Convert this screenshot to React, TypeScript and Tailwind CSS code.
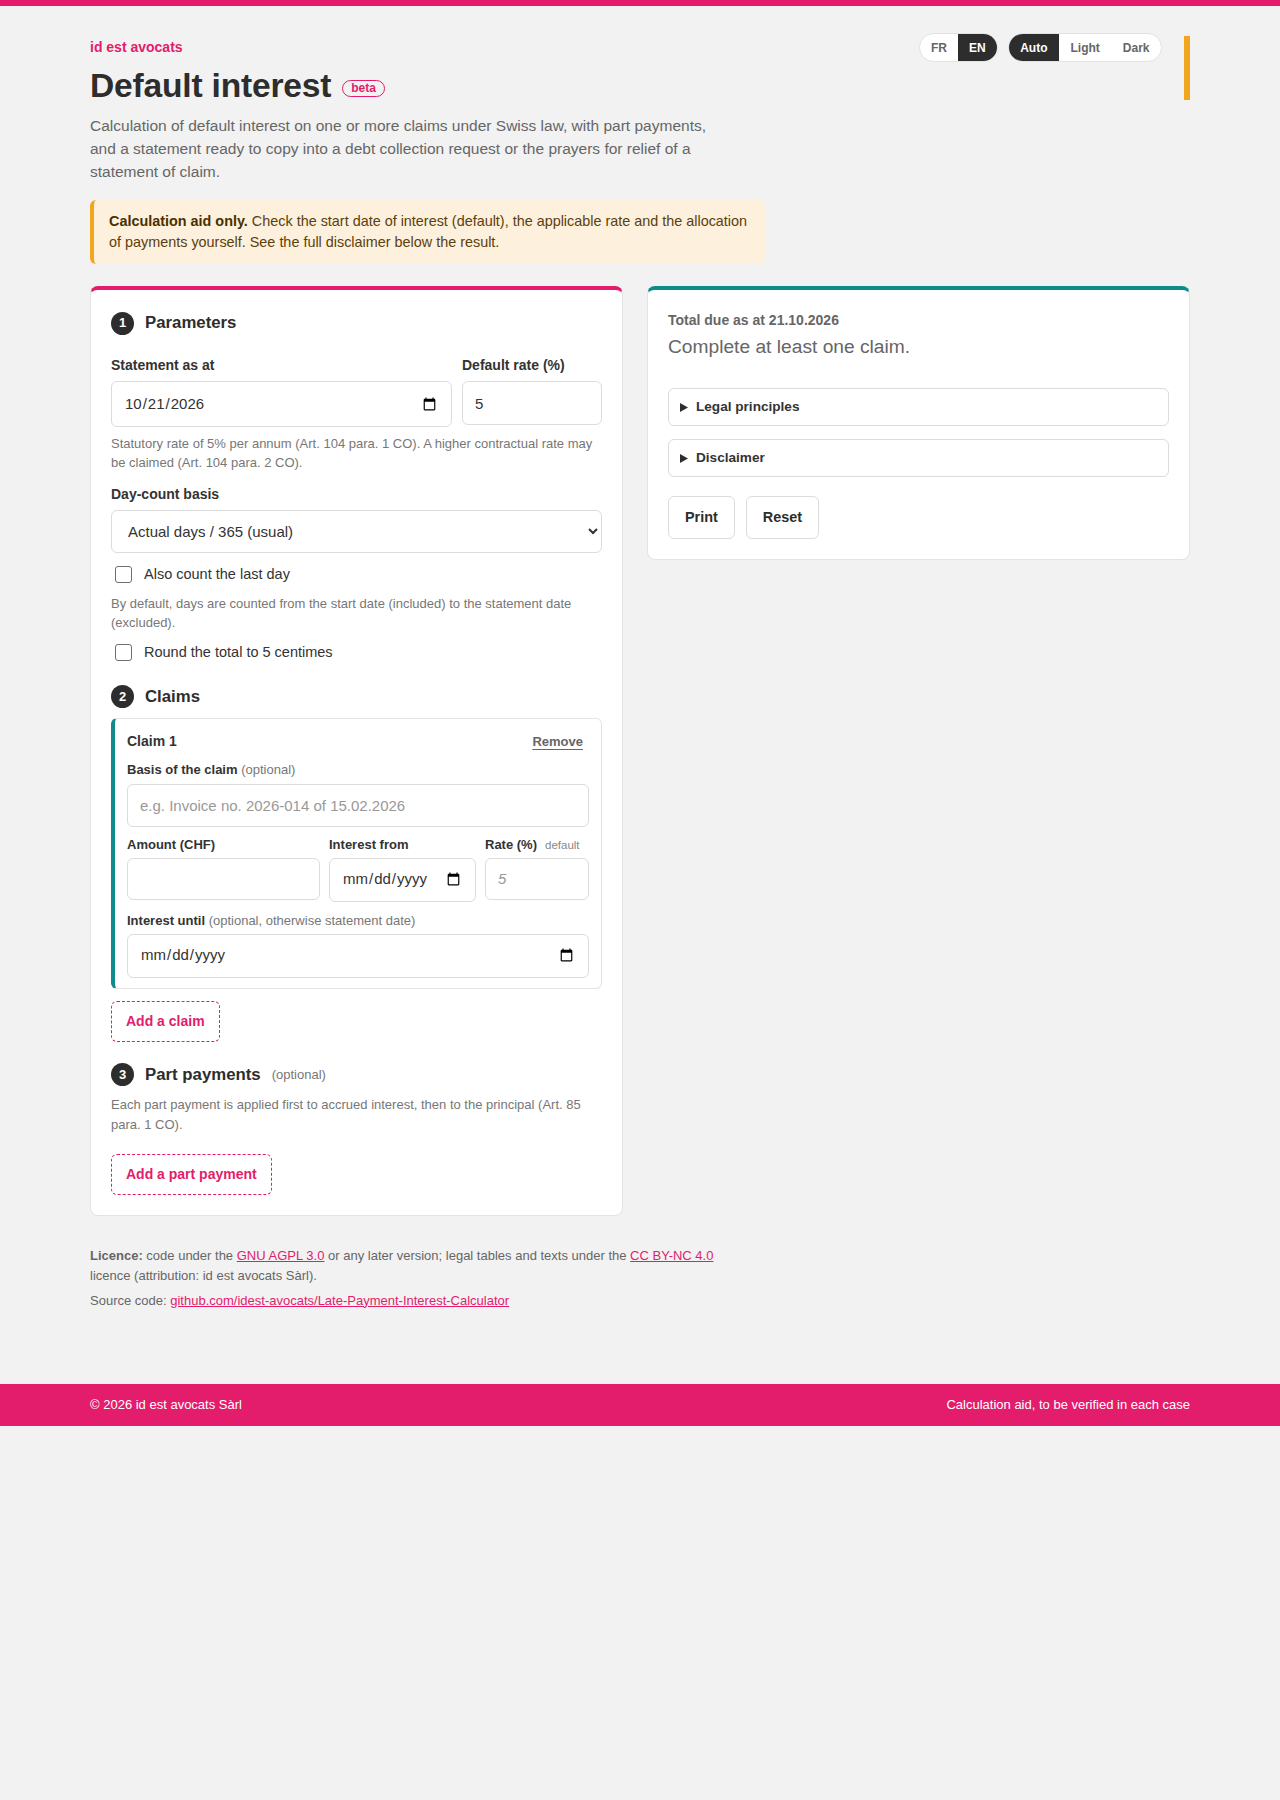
import React from "react";

const PINK = "text-[#e31c6c]";

function StepBadge({ n }: { n: number }) {
  return (
    <span className="flex h-[23px] w-[23px] shrink-0 items-center justify-center rounded-full bg-[#2d2d2d] text-[13px] font-bold text-white">
      {n}
    </span>
  );
}

function SectionHeader({ n, title, note }: { n: number; title: string; note?: string }) {
  return (
    <div className="flex h-6 items-center gap-[11px]">
      <StepBadge n={n} />
      <h2 className="text-[16.8px] font-bold leading-5 text-[#2d2d2d]">{title}</h2>
      {note && <span className="text-[13px] text-[#777]">{note}</span>}
    </div>
  );
}

function Checkbox({ label }: { label: string }) {
  return (
    <label className="flex h-5 items-center gap-3 pl-1">
      <input
        type="checkbox"
        className="h-[17px] w-[17px] shrink-0 appearance-none rounded-[3px] border border-[#6f6f6f] bg-white"
      />
      <span className="text-[14.5px] text-[#333]">{label}</span>
    </label>
  );
}

const inputCls =
  "block w-full rounded-[6px] border border-[#dcdcdc] bg-white px-3 text-[15px] text-[#333] outline-none";

function Disclosure({ title, mt }: { title: string; mt: string }) {
  return (
    <div className={`${mt} flex items-center gap-2 rounded-[6px] border border-[#dcdcdc] px-[11px] py-[10px]`}>
      <svg width="8" height="9" viewBox="0 0 8 9" className="shrink-0">
        <path d="M0 0 L8 4.5 L0 9 Z" fill="#2d2d2d" />
      </svg>
      <span className="text-[13.6px] font-bold leading-4 text-[#333]">{title}</span>
    </div>
  );
}

export default function App() {
  return (
    <div className="min-h-[1800px] bg-[#f2f2f2] font-['Liberation_Sans',Arial,sans-serif] text-[#333]">
      <div className="h-[6px] bg-[#e31c6c]" />

      <div className="mx-auto w-[1100px]">
        {/* Header */}
        <header className="flex items-start justify-between pt-[27px]">
          <div>
            <div className={`mt-[6px] text-[14px] font-bold leading-4 ${PINK}`}>id est avocats</div>
            <div className="mt-[11px] flex items-center gap-[11px]">
              <h1 className="text-[33.6px] font-bold leading-[40px] tracking-[-0.2px] text-[#2d2d2d]">
                Default interest
              </h1>
              <span className={`mt-[4px] rounded-full border border-[#e31c6c] px-2 text-[12px] font-bold leading-[15px] ${PINK}`}>
                beta
              </span>
            </div>
            <p className="mt-[7.5px] max-w-[622px] text-[15.5px] leading-[23px] text-[#666]">
              Calculation of default interest on one or more claims under Swiss law, with part payments,
              and a statement ready to copy into a debt collection request or the prayers for relief of a
              statement of claim.
            </p>
            <div className="mt-[17.5px] w-[675px] rounded-[6px] border-l-4 border-[#f2a51f] bg-[#fdf0dc] py-[11px] pl-[15px] pr-[12px] text-[14.4px] leading-[21px] text-[#5b3f0c]">
              <strong className="text-[#4a3000]">Calculation aid only.</strong> Check the start date of
              interest (default), the applicable rate and the allocation of payments yourself. See the full
              disclaimer below the result.
            </div>
          </div>

          <div className="flex items-start gap-[22px]">
            <div className="flex items-start gap-[10px]">
              <div className="flex h-[29px] overflow-hidden rounded-full border border-[#e2e2e2] bg-white text-[12px] font-bold">
                <span className="flex items-center px-[11px] text-[#666]">FR</span>
                <span className="flex items-center bg-[#2d2d2d] px-[11px] text-white">EN</span>
              </div>
              <div className="flex h-[29px] overflow-hidden rounded-full border border-[#e2e2e2] bg-white text-[12px] font-bold">
                <span className="flex items-center bg-[#2d2d2d] px-[11.5px] text-white">Auto</span>
                <span className="flex items-center px-[11.5px] text-[#666]">Light</span>
                <span className="flex items-center px-[11.5px] text-[#666]">Dark</span>
              </div>
            </div>
            <div className="mt-[3px] h-[64px] w-[6px] bg-[#f2a51f]" />
          </div>
        </header>

        {/* Main grid */}
        <main className="mt-[22px] grid grid-cols-[533px_1fr] items-start gap-6">
          {/* Form card */}
          <section className="rounded-[8px] border border-[#e3e3e3] border-t-4 border-t-[#e31c6c] bg-white px-5 pb-5 pt-[21px]">
            <SectionHeader n={1} title="Parameters" />

            <div className="mt-[22px] grid grid-cols-[minmax(0,1fr)_140px] gap-x-[10px]">
              <div>
                <div className="mb-[7px] text-[14px] font-bold leading-[17px]">Statement as at</div>
                <input type="date" defaultValue="2026-10-21" className={`${inputCls} h-[46px] text-[15.5px]`} />
              </div>
              <div>
                <div className="mb-[7px] text-[14px] font-bold leading-[17px]">Default rate (%)</div>
                <input type="text" defaultValue="5" className={`${inputCls} h-[44px]`} />
              </div>
            </div>
            <p className="mt-[6.5px] text-[13px] leading-[19px] text-[#777]">
              Statutory rate of 5% per annum (Art. 104 para. 1 CO). A higher contractual rate may be claimed
              (Art. 104 para. 2 CO).
            </p>

            <div className="mt-[14px] mb-[7px] text-[14px] font-bold leading-[17px]">Day-count basis</div>
            <select className={`${inputCls} h-[43px] text-[15.5px]`} defaultValue="365">
              <option value="365">Actual days / 365 (usual)</option>
              <option value="360">30 / 360</option>
            </select>

            <div className="mt-[12px]">
              <Checkbox label="Also count the last day" />
            </div>
            <p className="mt-[9px] text-[13px] leading-[19px] text-[#777]">
              By default, days are counted from the start date (included) to the statement date (excluded).
            </p>
            <div className="mt-[11px]">
              <Checkbox label="Round the total to 5 centimes" />
            </div>

            <div className="mt-[22px]">
              <SectionHeader n={2} title="Claims" />
            </div>

            <div className="mt-[9px] rounded-[6px] border border-[#e3e3e3] border-l-4 border-l-[#0f8b8d] px-3 pb-[10px] pt-[14px]">
              <div className="flex items-center justify-between">
                <span className="text-[14px] font-bold leading-[17px]">Claim 1</span>
                <span className="mr-[6px] text-[13px] font-bold leading-[17px] text-[#666] underline underline-offset-[3px]">
                  Remove
                </span>
              </div>

              <div className="mt-3 mb-[6px] text-[13px] leading-4">
                <b>Basis of the claim</b> <span className="text-[#777]">(optional)</span>
              </div>
              <input
                type="text"
                placeholder="e.g. Invoice no. 2026-014 of 15.02.2026"
                className={`${inputCls} h-[43px] placeholder:text-[#999]`}
              />

              <div className="mt-[10px] grid grid-cols-[minmax(0,193fr)_minmax(0,147fr)_minmax(0,104fr)] gap-x-[9px]">
                <div>
                  <div className="mb-[5px] text-[13px] font-bold leading-4">Amount (CHF)</div>
                  <input type="text" className={`${inputCls} h-[42px]`} />
                </div>
                <div>
                  <div className="mb-[5px] text-[13px] font-bold leading-4">Interest from</div>
                  <input type="date" className={`${inputCls} h-[44px]`} />
                </div>
                <div>
                  <div className="mb-[5px] flex items-baseline gap-2 text-[13px] leading-4">
                    <b>Rate (%)</b>
                    <span className="text-[11.5px] text-[#888]">default</span>
                  </div>
                  <input
                    type="text"
                    placeholder="5"
                    className={`${inputCls} h-[42px] placeholder:italic placeholder:text-[#999]`}
                  />
                </div>
              </div>

              <div className="mt-[11px] mb-[5px] text-[13px] leading-4">
                <b>Interest until</b>{" "}
                <span className="text-[#777]">(optional, otherwise statement date)</span>
              </div>
              <input type="date" className={`${inputCls} h-[44px]`} />
            </div>

            <button className={`mt-3 h-[41px] rounded-[6px] border border-dashed border-[#e31c6c] px-[14px] text-[14px] font-bold ${PINK}`}>
              Add a claim
            </button>

            <div className="mt-[21px]">
              <SectionHeader n={3} title="Part payments" note="(optional)" />
            </div>
            <p className="mt-[8px] text-[13px] leading-5 text-[#777]">
              Each part payment is applied first to accrued interest, then to the principal (Art. 85 para. 1
              CO).
            </p>
            <button className={`mt-[19px] h-[41px] rounded-[6px] border border-dashed border-[#e31c6c] px-[14px] text-[14px] font-bold ${PINK}`}>
              Add a part payment
            </button>
          </section>

          {/* Result card */}
          <section className="rounded-[8px] border border-[#e3e3e3] border-t-4 border-t-[#0f8b8d] bg-white px-5 pb-5 pt-[22px]">
            <div className="text-[14px] font-bold leading-[17px] text-[#666]">Total due as at 21.10.2026</div>
            <div className="mt-[6px] text-[19.2px] leading-6 text-[#666]">Complete at least one claim.</div>

            <Disclosure title="Legal principles" mt="mt-[29px]" />
            <Disclosure title="Disclaimer" mt="mt-[13px]" />

            <div className="mt-[19px] flex gap-[11px]">
              <button className="h-[43px] rounded-[6px] border border-[#dcdcdc] bg-white px-4 text-[14.4px] font-bold text-[#2d2d2d]">
                Print
              </button>
              <button className="h-[43px] rounded-[6px] border border-[#dcdcdc] bg-white px-4 text-[14.4px] font-bold text-[#2d2d2d]">
                Reset
              </button>
            </div>
          </section>
        </main>

        {/* Licence */}
        <div className="mt-[30px] text-[13px] leading-5 text-[#666]">
          <p className="max-w-[632px]">
            <b>Licence:</b> code under the{" "}
            <a className={`${PINK} underline`}>GNU AGPL 3.0</a> or any later version; legal tables and
            texts under the <a className={`${PINK} underline`}>CC BY-NC 4.0</a> licence (attribution: id
            est avocats Sàrl).
          </p>
          <p className="mt-[5px]">
            Source code:{" "}
            <a className={`${PINK} underline`}>github.com/idest-avocats/Late-Payment-Interest-Calculator</a>
          </p>
        </div>
      </div>

      <footer className="mt-[73px] h-[42px] bg-[#e31c6c]">
        <div className="mx-auto flex h-full w-[1100px] items-center justify-between text-[13px] text-white">
          <span>© 2026 id est avocats Sàrl</span>
          <span>Calculation aid, to be verified in each case</span>
        </div>
      </footer>
    </div>
  );
}
